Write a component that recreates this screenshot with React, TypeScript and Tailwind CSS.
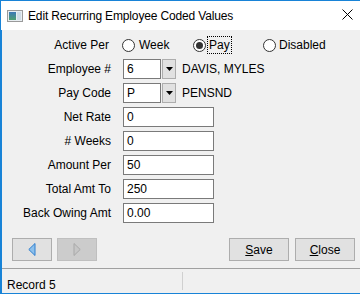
import React from "react";

function Radio({ checked }: { checked?: boolean }) {
  return (
    <span className="relative w-[13px] h-[13px] rounded-full border border-[#333333] bg-white flex items-center justify-center shrink-0">
      {checked && <span className="w-[7px] h-[7px] rounded-full bg-[#333333]" />}
    </span>
  );
}

function Row({ label, children }: { label: string; children: React.ReactNode }) {
  return (
    <div className="flex items-center h-[20px]">
      <div className="w-[109px] text-right whitespace-nowrap">{label}</div>
      <div className="ml-[12px] flex items-center">{children}</div>
    </div>
  );
}

function TextBox({ value }: { value: string }) {
  return (
    <div className="w-[91px] h-[20px] bg-white border border-[#7a7a7a] flex items-center pl-[3px]">{value}</div>
  );
}

function Combo({ value, text }: { value: string; text: string }) {
  return (
    <div className="flex items-center">
      <div className="w-[38px] h-[20px] bg-white border border-[#7a7a7a] flex items-center pl-[3px]">{value}</div>
      <div className="ml-[1px] w-[14px] h-[20px] bg-[#e1e1e1] border border-[#adadad] flex items-center justify-center">
        <svg width="7" height="4" viewBox="0 0 7 4">
          <path d="M0 0H7L3.5 4Z" fill="#000" />
        </svg>
      </div>
      <div className="ml-[6px] whitespace-nowrap">{text}</div>
    </div>
  );
}

export default function App() {
  return (
    <div className="w-[360px] h-[294px] bg-[#f0f0f0] border-t border-b border-l border-[#1883d7] flex flex-col font-['Liberation_Sans',Arial,sans-serif] text-[12px] text-black overflow-hidden">
      {/* title bar */}
      <div className="h-[29px] bg-white flex items-center pl-[6px] pr-[7px] shrink-0">
        <svg width="16" height="12" viewBox="0 0 16 12" className="shrink-0">
          <defs>
            <linearGradient id="g1" x1="0" y1="0" x2="0" y2="1">
              <stop offset="0" stopColor="#3d78b8" />
              <stop offset="1" stopColor="#4fa070" />
            </linearGradient>
          </defs>
          <rect x="0.5" y="0.5" width="15" height="11" fill="#e8eef2" stroke="#9a9a9a" />
          <rect x="2" y="2" width="7" height="8" fill="url(#g1)" />
          <rect x="10" y="2" width="4" height="8" fill="#cfdce6" />
        </svg>
        <div className="ml-[5px] whitespace-nowrap tracking-[-0.15px]">Edit Recurring Employee Coded Values</div>
        <div className="flex-1" />
        <svg width="11" height="11" viewBox="0 0 11 11" className="mb-[3px]">
          <path d="M0.5 0.5L10.5 10.5M10.5 0.5L0.5 10.5" stroke="#000" strokeWidth="1" />
        </svg>
      </div>

      {/* body */}
      <div className="flex-1 flex flex-col border-l border-[#1883d7]">
        <div className="pt-[5px] flex flex-col gap-[4px]">
          <div className="flex items-center h-[20px]">
            <div className="w-[107px] text-right whitespace-nowrap">Active Per</div>
            <div className="ml-[13px] flex items-center">
              <div className="w-[71px] flex items-center">
                <Radio />
                <span className="ml-[4px]">Week</span>
              </div>
              <div className="w-[70px] flex items-center">
                <Radio checked />
                <span className="ml-[1px] h-[18px] px-[1px] border border-dotted border-black flex items-center">Pay</span>
              </div>
              <div className="flex items-center">
                <Radio />
                <span className="ml-[3px]">Disabled</span>
              </div>
            </div>
          </div>
          <Row label="Employee #">
            <Combo value="6" text="DAVIS, MYLES" />
          </Row>
          <Row label="Pay Code">
            <Combo value="P" text="PENSND" />
          </Row>
          <Row label="Net Rate">
            <TextBox value="0" />
          </Row>
          <Row label="# Weeks">
            <TextBox value="0" />
          </Row>
          <Row label="Amount Per">
            <TextBox value="50" />
          </Row>
          <Row label="Total Amt To">
            <TextBox value="250" />
          </Row>
          <Row label="Back Owing Amt">
            <TextBox value="0.00" />
          </Row>
        </div>

        {/* buttons */}
        <div className="mt-[15px] h-[23px] flex items-center pl-[10px] pr-[5px]">
          <div className="w-[40px] h-[23px] bg-[#e1e1e1] border border-[#adadad] flex items-center justify-center">
            <svg width="8" height="13" viewBox="0 0 8 13">
              <path d="M7 0.5V12.5L0.8 6.5Z" fill="#8cc0ec" stroke="#2f7fcf" strokeWidth="1" />
            </svg>
          </div>
          <div className="ml-[5px] w-[40px] h-[23px] bg-[#cccccc] border border-[#bfbfbf] flex items-center justify-center">
            <svg width="8" height="13" viewBox="0 0 8 13">
              <path d="M1 0.5V12.5L7.2 6.5Z" fill="#c6c6c6" stroke="#a8a8a8" strokeWidth="1" />
            </svg>
          </div>
          <div className="flex-1" />
          <div className="w-[60px] h-[23px] bg-[#e1e1e1] border border-[#adadad] flex items-center justify-center">
            <span><span className="underline">S</span>ave</span>
          </div>
          <div className="ml-[6px] w-[60px] h-[23px] bg-[#e1e1e1] border border-[#adadad] flex items-center justify-center">
            <span><span className="underline">C</span>lose</span>
          </div>
        </div>

        <div className="flex-1" />

        {/* status bar */}
        <div className="h-[25px] border-t border-[#a0a0a0] flex items-stretch">
          <div className="w-[180px] pl-[5px] pt-[7px]">Record 5</div>
          <div className="w-[1px] my-[3px] bg-[#d0d0d0]" />
          <div className="flex-1" />
        </div>
      </div>
    </div>
  );
}
